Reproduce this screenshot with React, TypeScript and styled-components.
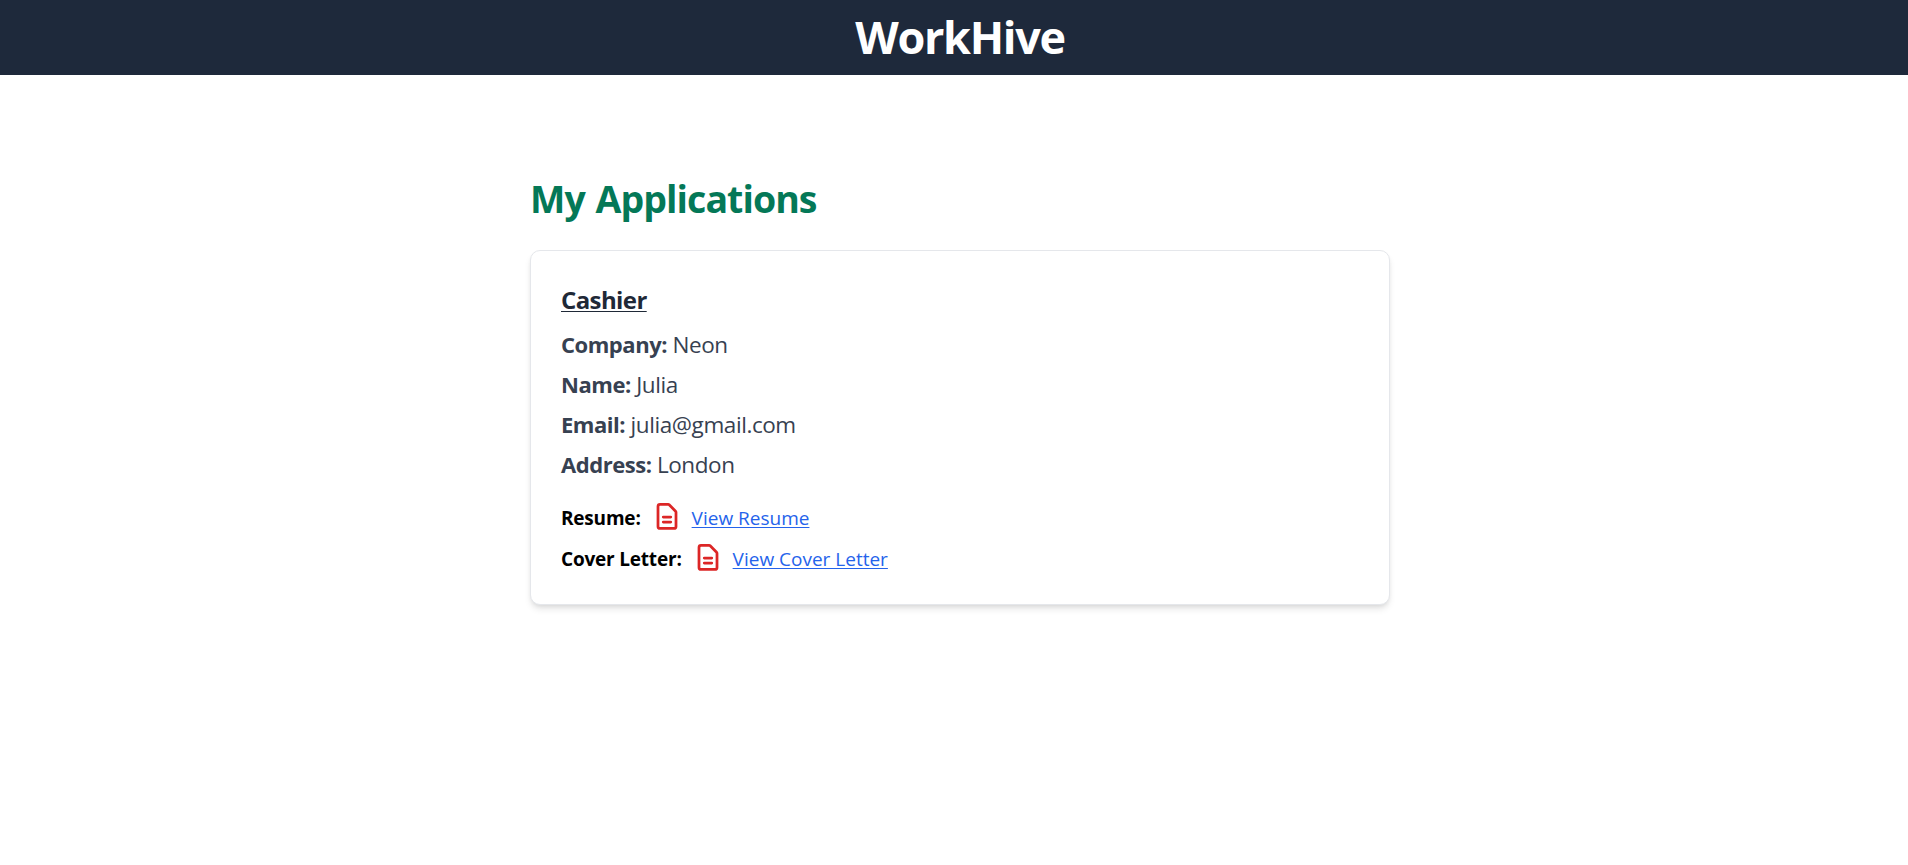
import React from "react";
import styled, { createGlobalStyle } from "styled-components";

const Global = createGlobalStyle`
  *, *::before, *::after { box-sizing: border-box; }
  body { margin: 0; background: #fff; color: #000; font-family: "Open Sans", "Noto Sans", sans-serif; line-height: 1.5; }
  h1, h2, h3, p { margin: 0; }
`;
const Page = styled.div`
  min-height: 100vh;
`;
const Header = styled.header`
  height: 75px; display: flex; align-items: center; justify-content: center; background: #1e293b; padding-left: 12px;
`;
const Brand = styled.h1`
  color: #fff; font-size: 45px; line-height: 50px; font-weight: 700; letter-spacing: -1.3px; white-space: nowrap;
  padding-bottom: 1px;
`;
const Main = styled.main`
  width: 872px; margin: 0 auto; padding: 99px 0 0 12px;
`;
const Title = styled.h2`
  color: #047857; font-size: 37.5px; line-height: 50px; font-weight: 700; letter-spacing: -0.95px; word-spacing: 2px; margin-bottom: 26px;
`;
const Card = styled.section`
  height: 355px; border: 1px solid #e5e7eb; border-radius: 10px; padding: 31px 30px 30px; background: #fff;
  box-shadow: 0 5px 7.5px -1px rgba(0, 0, 0, 0.1), 0 2.5px 5px -2.5px rgba(0, 0, 0, 0.1);
`;
const Job = styled.h3`
  color: #1f2937; font-size: 24px; line-height: 36px; font-weight: 700; letter-spacing: -0.6px;
  text-decoration: underline; text-decoration-thickness: 1px; text-underline-offset: 2px; margin-bottom: 7px;
`;
const Field = styled.p`
  color: #374151; font-size: 22.5px; height: 40px; line-height: 40px; letter-spacing: -0.42px;
  strong { font-size: 22px; line-height: 1; letter-spacing: -0.46px; }
`;
const Documents = styled.div`
  padding-top: 12px;
`;
const Doc = styled.div`
  display: flex; align-items: center; font-size: 19px; height: 41px;
`;
const Label = styled.strong`
  letter-spacing: -0.2px; padding-top: 1px;
`;
const Icon = styled.svg`
  width: 30px; height: 30px; margin: 0 10px 1px 11px; flex: none; color: #dc2626;
`;
const Link = styled.a`
  color: #2563eb; text-decoration: underline; text-decoration-thickness: 1px; text-underline-offset: 2px; padding-top: 1px;
`;

const FileIcon = () => (
  <Icon viewBox="0 0 24 24" fill="none" stroke="currentColor" strokeWidth="2.2" strokeLinecap="round" strokeLinejoin="round">
    <path d="M9 12h6M9 16h6M17.6 21.1H6.4a1.6 1.6 0 0 1-1.6-1.6v-16a1.6 1.6 0 0 1 1.6-1.6h6.5a1.2 1.2 0 0 1 .85.35l5.1 5.1a1.2 1.2 0 0 1 .35.85v11.3a1.6 1.6 0 0 1-1.6 1.6z" />
  </Icon>
);

const fields = [
  { label: "Company:", value: "Neon" },
  { label: "Name:", value: "Julia" },
  { label: "Email:", value: "julia@gmail.com" },
  { label: "Address:", value: "London" },
];

export default function App() {
  return (
    <Page>
      <Global />
      <Header><Brand>WorkHive</Brand></Header>
      <Main>
        <Title>My Applications</Title>
        <Card>
          <Job>Cashier</Job>
          {fields.map((f) => (
            <Field key={f.label}><strong>{f.label}</strong> {f.value}</Field>
          ))}
          <Documents>
            <Doc><Label>Resume:</Label><FileIcon /><Link>View Resume</Link></Doc>
            <Doc><Label>Cover Letter:</Label><FileIcon /><Link>View Cover Letter</Link></Doc>
          </Documents>
        </Card>
      </Main>
    </Page>
  );
}
